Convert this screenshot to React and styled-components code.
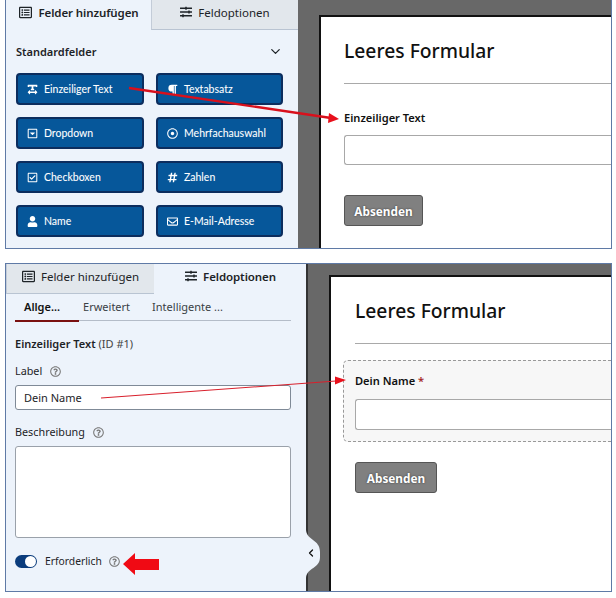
import React from "react";
import styled, { createGlobalStyle } from "styled-components";
import { ChevronDown, ChevronLeft } from "lucide-react";
import {
  FaRegListAlt,
  FaSlidersH,
  FaTextWidth,
  FaParagraph,
  FaRegCaretSquareDown,
  FaRegDotCircle,
  FaRegCheckSquare,
  FaHashtag,
  FaUser,
  FaRegEnvelope,
  FaRegQuestionCircle,
} from "react-icons/fa";

const FIELDS = [
  { icon: FaTextWidth, label: "Einzeiliger Text" },
  { icon: FaParagraph, label: "Textabsatz" },
  { icon: FaRegCaretSquareDown, label: "Dropdown" },
  { icon: FaRegDotCircle, label: "Mehrfachauswahl" },
  { icon: FaRegCheckSquare, label: "Checkboxen" },
  { icon: FaHashtag, label: "Zahlen" },
  { icon: FaUser, label: "Name" },
  { icon: FaRegEnvelope, label: "E-Mail-Adresse" },
];

const App = () => (
  <>
    <GlobalStyle />
    <Page>
      <TopShot>
        <Sidebar>
          <Tabs $columns="145px 1fr">
            <Tab $active>
              <FaRegListAlt size={13} /> <b>Felder hinzufügen</b>
            </Tab>
            <Tab>
              <FaSlidersH size={12} /> Feldoptionen
            </Tab>
          </Tabs>
          <FieldsPane>
            <PaneHead>
              Standardfelder
              <ChevronDown size={15} strokeWidth={2} />
            </PaneHead>
            <FieldGrid>
              {FIELDS.map(({ icon: Icon, label }) => (
                <FieldButton key={label}>
                  <Icon size={11} />
                  {label}
                </FieldButton>
              ))}
            </FieldGrid>
          </FieldsPane>
        </Sidebar>
        <Gutter $top={15} $left={21}>
          <FormCard>
            <FormTitle>Leeres Formular</FormTitle>
            <FormRule />
            <PlainField>
              <FieldLabel>Einzeiliger Text</FieldLabel>
              <FakeInput />
            </PlainField>
            <SubmitButton $top={30} $width={79}>
              Absenden
            </SubmitButton>
          </FormCard>
        </Gutter>
        <Arrow width="230" height="50" viewBox="0 0 230 50" $left={122} $top={84}>
          <line x1="1" y1="4" x2="203" y2="34" stroke="#d8101c" strokeWidth="2.4" />
          <polygon points="211,35 201,29 200,39" fill="#e8101c" />
        </Arrow>
      </TopShot>

      <BottomShot>
        <Sidebar>
          <Tabs $columns="148px 1fr">
            <Tab>
              <FaRegListAlt size={13} /> Felder hinzufügen
            </Tab>
            <Tab $active>
              <FaSlidersH size={12} /> <b>Feldoptionen</b>
            </Tab>
          </Tabs>
          <OptionsPane>
            <SubTabs>
              <SubTab $active>Allge...</SubTab>
              <SubTab>Erweitert</SubTab>
              <SubTab>Intelligente ...</SubTab>
            </SubTabs>
            <OptionsTitle>
              <b>Einzeiliger Text</b> <Muted>(ID #1)</Muted>
            </OptionsTitle>
            <OptionLabel>
              Label <HelpIcon />
            </OptionLabel>
            <TextValue>Dein Name</TextValue>
            <OptionLabel $gap={13}>
              Beschreibung <HelpIcon />
            </OptionLabel>
            <TextBlock />
            <ToggleRow>
              <Toggle />
              Erforderlich <HelpIcon $gap={7} />
            </ToggleRow>
          </OptionsPane>
        </Sidebar>
        <Gutter $top={11} $left={21} $edge>
          <FormCard>
            <FormTitle $indent={24}>Leeres Formular</FormTitle>
            <FormRule $indent={24} $bottom={16} />
            <SelectedField>
              <FieldLabel $bottom={9}>
                Dein Name <Required>*</Required>
              </FieldLabel>
              <FakeInput $height={31} />
            </SelectedField>
            <SubmitButton $top={20} $width={82} $indent={24}>
              Absenden
            </SubmitButton>
          </FormCard>
        </Gutter>
        <Notch width="16" height="48" viewBox="0 0 16 48">
          <path
            d="M0 0 C1 11 14 9 14 22 L14 27 C14 39 1 37 0 48 Z"
            fill="#edf3fb"
          />
        </Notch>
        <NotchChevron size={12} strokeWidth={2.5} />
        <Arrow width="260" height="40" viewBox="0 0 260 40" $left={94} $top={111}>
          <line x1="1" y1="23" x2="236" y2="6" stroke="#d8202c" strokeWidth="1.1" />
          <polygon points="246,5 235,1.5 235,9.5" fill="#e8101c" />
        </Arrow>
        <Arrow width="40" height="24" viewBox="0 0 40 24" $left={116} $top={288}>
          <polygon points="1,12 13,1 13,7 37,7 37,18 13,18 13,23" fill="#f00a14" />
        </Arrow>
      </BottomShot>
    </Page>
  </>
);

const GlobalStyle = createGlobalStyle`
  html, body {
    margin: 0;
    background: #fff;
  }
  body {
    font-family: "Noto Sans", "Open Sans", sans-serif;
    color: #1d2327;
  }
`;

const Page = styled.div`
  width: 616px;
  height: 598px;
  padding-left: 5px;
  box-sizing: border-box;
  overflow: hidden;
`;

const Shot = styled.section`
  position: relative;
  display: grid;
  width: 607px;
  box-sizing: border-box;
  border: 1px solid #5f7aa6;
  border-top: none;
`;

const TopShot = styled(Shot)`
  grid-template-columns: 292px 1fr;
  height: 249px;
`;

const BottomShot = styled(Shot)`
  grid-template-columns: 300px 1fr;
  height: 329px;
  margin-top: 14px;
  border-top: 1px solid #5f7aa6;
`;

const Sidebar = styled.div`
  display: flex;
  flex-direction: column;
  background: #edf3fb;
  min-width: 0;
`;

const Tabs = styled.div`
  display: grid;
  grid-template-columns: ${(p) => p.$columns};
  height: 30px;
  flex: none;
`;

const Tab = styled.div`
  display: flex;
  align-items: center;
  justify-content: center;
  gap: 6px;
  padding-bottom: 5px;
  box-sizing: border-box;
  font-size: 11.5px;
  background: ${(p) => (p.$active ? "#edf3fb" : "#e2e7ec")};
  border-bottom: 1px solid ${(p) => (p.$active ? "transparent" : "#b9c4d2")};
  border-left: 1px solid ${(p) => (p.$active ? "transparent" : "#c3ccd8")};
  b {
    font-weight: 600;
    letter-spacing: -0.1px;
  }
`;

const FieldsPane = styled.div`
  padding: 11px 15px 0 10px;
`;

const PaneHead = styled.div`
  display: flex;
  justify-content: space-between;
  align-items: center;
  font-size: 11px;
  font-weight: 600;
  height: 20px;
  margin-bottom: 12px;
`;

const FieldGrid = styled.div`
  display: grid;
  grid-template-columns: 128px 127px;
  grid-auto-rows: 32px;
  gap: 12px;
`;

const FieldButton = styled.div`
  display: flex;
  align-items: center;
  gap: 6px;
  padding-left: 9px;
  box-sizing: border-box;
  background: #06579a;
  border: 2px solid #0c2d5e;
  border-radius: 4px;
  color: #fff;
  font-family: "Lato", sans-serif;
  font-size: 10.5px;
  text-shadow: 0 0 1px #fff3;
`;

const Gutter = styled.div`
  display: flex;
  min-width: 0;
  overflow: hidden;
  background: #686868;
  padding-top: ${(p) => p.$top}px;
  padding-left: ${(p) => p.$left}px;
  border-left: ${(p) => (p.$edge ? "2px solid #333" : "none")};
`;

const FormCard = styled.div`
  flex: 1;
  min-width: 0;
  background: #fff;
  border-top: 2px solid #111;
  border-left: 2px solid #111;
  box-sizing: border-box;
`;

const FormTitle = styled.h1`
  margin: 20px 0 0 ${(p) => p.$indent ?? 23}px;
  font-size: 19.3px;
  font-weight: 500;
  line-height: 28px;
  color: #111;
`;

const FormRule = styled.hr`
  margin: 18px 0 ${(p) => p.$bottom ?? 25}px ${(p) => p.$indent ?? 23}px;
  border: none;
  border-top: 1px solid #a9a9a9;
`;

const PlainField = styled.div`
  padding-left: 23px;
`;

const SelectedField = styled.div`
  margin-left: 12px;
  padding: 11px 0 10px 11px;
  height: 82px;
  box-sizing: border-box;
  background: #f7f7f7;
  border: 1px dashed #999;
  border-right: none;
  border-radius: 5px 0 0 5px;
`;

const FieldLabel = styled.div`
  font-size: 11.1px;
  font-weight: 600;
  color: #111;
  line-height: 18px;
  margin-bottom: ${(p) => p.$bottom ?? 8}px;
`;

const Required = styled.span`
  color: #a52727;
`;

const FakeInput = styled.div`
  height: ${(p) => p.$height ?? 30}px;
  box-sizing: border-box;
  background: #fff;
  border: 1px solid #a8a8a8;
  border-right: none;
  border-radius: 3px 0 0 3px;
`;

const SubmitButton = styled.div`
  display: flex;
  align-items: center;
  justify-content: center;
  width: ${(p) => p.$width}px;
  height: 31px;
  margin: ${(p) => p.$top}px 0 0 ${(p) => p.$indent ?? 23}px;
  box-sizing: border-box;
  background: #808080;
  border: 1px solid #555;
  border-radius: 3px;
  color: #fff;
  font-size: 11.8px;
  font-weight: 700;
  text-shadow: 0 0 2px #333;
`;

const OptionsPane = styled.div`
  padding: 0 15px 0 9px;
`;

const SubTabs = styled.div`
  display: flex;
  height: 26px;
  border-bottom: 1px solid #b4bcc8;
`;

const SubTab = styled.div`
  font-size: 11px;
  line-height: 26px;
  color: ${(p) => (p.$active ? "#111" : "#3a3f45")};
  font-weight: ${(p) => (p.$active ? 600 : 400)};
  padding: ${(p) => (p.$active ? "0 19px 0 9px" : "0 18px 0 0")};
  height: ${(p) => (p.$active ? "26px" : "auto")};
  margin-left: ${(p) => (p.$active ? "0" : "4px")};
  border-bottom: ${(p) => (p.$active ? "2px solid #7a1010" : "none")};
`;

const OptionsTitle = styled.div`
  margin-top: 14px;
  font-size: 11px;
  line-height: 18px;
  b {
    font-weight: 600;
  }
`;

const Muted = styled.span`
  color: #444;
`;

const OptionLabel = styled.div`
  display: flex;
  align-items: center;
  margin-top: ${(p) => p.$gap ?? 9}px;
  margin-bottom: 5px;
  font-size: 10.8px;
  line-height: 18px;
`;

const HelpIcon = styled(FaRegQuestionCircle)`
  margin-left: ${(p) => p.$gap ?? 8}px;
  width: 11px;
  height: 11px;
  color: #777;
`;

const TextValue = styled.div`
  display: flex;
  align-items: center;
  height: 25px;
  padding-left: 8px;
  box-sizing: border-box;
  background: #fff;
  border: 1px solid #7f8a97;
  border-radius: 3px;
  font-size: 11px;
`;

const TextBlock = styled.div`
  height: 92px;
  box-sizing: border-box;
  background: #fff;
  border: 1px solid #9aa1aa;
  border-radius: 3px;
`;

const ToggleRow = styled.div`
  display: flex;
  align-items: center;
  margin-top: 16px;
  font-size: 10.3px;
`;

const Toggle = styled.span`
  position: relative;
  width: 22px;
  height: 13px;
  margin-right: 8px;
  border-radius: 7px;
  background: #0b3c7c;
  &::after {
    content: "";
    position: absolute;
    right: 1px;
    top: 1px;
    width: 11px;
    height: 11px;
    border-radius: 50%;
    background: #fff;
  }
`;

const Notch = styled.svg`
  position: absolute;
  left: 300px;
  top: 266px;
`;

const NotchChevron = styled(ChevronLeft)`
  position: absolute;
  left: 299px;
  top: 283px;
  color: #111;
`;

const Arrow = styled.svg`
  position: absolute;
  left: ${(p) => p.$left}px;
  top: ${(p) => p.$top}px;
  pointer-events: none;
`;

export default App;
